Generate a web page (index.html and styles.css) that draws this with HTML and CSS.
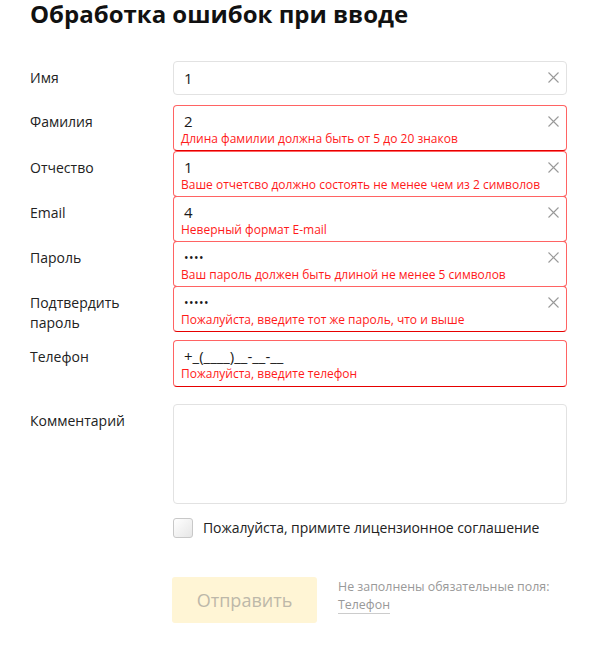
FILE: index.html
```html
<!DOCTYPE html>
<html lang="ru">
<head>
<meta charset="utf-8">
<title>Обработка ошибок при вводе</title>
<link rel="stylesheet" href="styles.css">
</head>
<body>
<div class="page">
  <h1 class="title">Обработка ошибок при вводе</h1>
  <form class="form">
    <div class="row row-first">
      <div class="label">Имя</div>
      <div class="field">
        <div class="value">1</div>
        <svg class="clear" viewBox="0 0 11 11"><path d="M0.5 0.5L10.5 10.5M10.5 0.5L0.5 10.5"/></svg>
      </div>
    </div>
    <div class="row">
      <div class="label">Фамилия</div>
      <div class="field err">
        <div class="value">2</div>
        <div class="msg">Длина фамилии должна быть от 5 до 20 знаков</div>
        <svg class="clear" viewBox="0 0 11 11"><path d="M0.5 0.5L10.5 10.5M10.5 0.5L0.5 10.5"/></svg>
      </div>
    </div>
    <div class="row">
      <div class="label">Отчество</div>
      <div class="field err stack">
        <div class="value">1</div>
        <div class="msg">Ваше отчетсво должно состоять не менее чем из 2 символов</div>
        <svg class="clear" viewBox="0 0 11 11"><path d="M0.5 0.5L10.5 10.5M10.5 0.5L0.5 10.5"/></svg>
      </div>
    </div>
    <div class="row">
      <div class="label">Email</div>
      <div class="field err stack">
        <div class="value">4</div>
        <div class="msg">Неверный формат E-mail</div>
        <svg class="clear" viewBox="0 0 11 11"><path d="M0.5 0.5L10.5 10.5M10.5 0.5L0.5 10.5"/></svg>
      </div>
    </div>
    <div class="row">
      <div class="label">Пароль</div>
      <div class="field err stack">
        <div class="value dots">••••</div>
        <div class="msg">Ваш пароль должен быть длиной не менее 5 символов</div>
        <svg class="clear" viewBox="0 0 11 11"><path d="M0.5 0.5L10.5 10.5M10.5 0.5L0.5 10.5"/></svg>
      </div>
    </div>
    <div class="row">
      <div class="label">Подтвердить<br>пароль</div>
      <div class="field err stack">
        <div class="value dots">•••••</div>
        <div class="msg">Пожалуйста, введите тот же пароль, что и выше</div>
        <svg class="clear" viewBox="0 0 11 11"><path d="M0.5 0.5L10.5 10.5M10.5 0.5L0.5 10.5"/></svg>
      </div>
    </div>
    <div class="row row-phone">
      <div class="label">Телефон</div>
      <div class="field err phone">
        <div class="value">+_(____)__-__-__</div>
        <div class="msg">Пожалуйста, введите телефон</div>
      </div>
    </div>
    <div class="row">
      <div class="label">Комментарий</div>
      <div class="field area"></div>
    </div>
    <div class="agree">
      <span class="checkbox"></span>
      <span class="agree-text">Пожалуйста, примите лицензионное соглашение</span>
    </div>
    <div class="actions">
      <div class="submit">Отправить</div>
      <div class="hint">Не заполнены обязательные поля:<br><span class="hint-link">Телефон</span></div>
    </div>
  </form>
</div>
</body>
</html>
```

FILE: styles.css
```css
* { box-sizing: border-box; }
html, body { margin: 0; padding: 0; background: #fff; }
body {
  font-family: "Open Sans", "Noto Sans", "DejaVu Sans", sans-serif;
  color: #222;
}
.page { padding: 0 27px 0 30px; }
.title {
  margin: 0;
  font-size: 24px;
  line-height: 28px;
  font-weight: 700;
  color: #111;
}
.form { display: flex; flex-direction: column; margin-top: 33px; }
.row {
  display: flex;
  align-items: flex-start;
  min-height: 45px;
}
.row-first { min-height: 44px; }
.label {
  width: 143px;
  flex: none;
  font-size: 14px;
  line-height: 20px;
  padding: 7px 0 7px;
  color: #222;
}
.field {
  position: relative;
  flex: 1;
  height: 34px;
  border: 1px solid #e2e2e2;
  border-radius: 4px;
  background: #fff;
}
.field.err {
  height: 46px;
  border-color: #ff6363;
  border-bottom-color: #e60000;
}
.field.stack { margin-bottom: -1px; }
.field.phone { height: 47px; }
.row-phone { margin-bottom: 17px; }
.value {
  height: 32px;
  line-height: 32px;
  font-size: 15px;
  padding-left: 10px;
  color: #1a1a1a;
}
.err .value {
  height: 27px;
  padding-top: 4px;
  line-height: 23px;
}
.value.dots { font-size: 12px; letter-spacing: 0.5px; }
.msg {
  padding: 0 7px;
  font-size: 12px;
  line-height: 12px;
  color: #ff1a1a;
  white-space: nowrap;
}
.clear {
  position: absolute;
  right: 7px;
  top: 10px;
  width: 11px;
  height: 11px;
  fill: none;
  stroke: #999;
  stroke-width: 1.1;
}
.field.area { height: 100px; }
.agree {
  display: flex;
  align-items: center;
  margin: 14px 0 0 143px;
  gap: 10px;
}
.checkbox {
  width: 20px;
  height: 20px;
  border: 1px solid #c8c8c8;
  border-radius: 3px;
  background: linear-gradient(135deg, #ffffff 0%, #e6e6e6 100%);
}
.agree-text { font-size: 14px; line-height: 20px; color: #222; letter-spacing: -0.07px; }
.actions {
  display: flex;
  align-items: flex-start;
  margin: 39px 0 0 142px;
  gap: 21px;
}
.submit {
  width: 145px;
  height: 46px;
  border-radius: 3px;
  background: #fff5d5;
  color: #bdb8a9;
  font-size: 18px;
  line-height: 46px;
  text-align: center;
}
.hint {
  padding-top: 1px;
  font-size: 12.4px;
  line-height: 18px;
  color: #999;
}
.hint-link { border-bottom: 1px solid #ccc; }
```
